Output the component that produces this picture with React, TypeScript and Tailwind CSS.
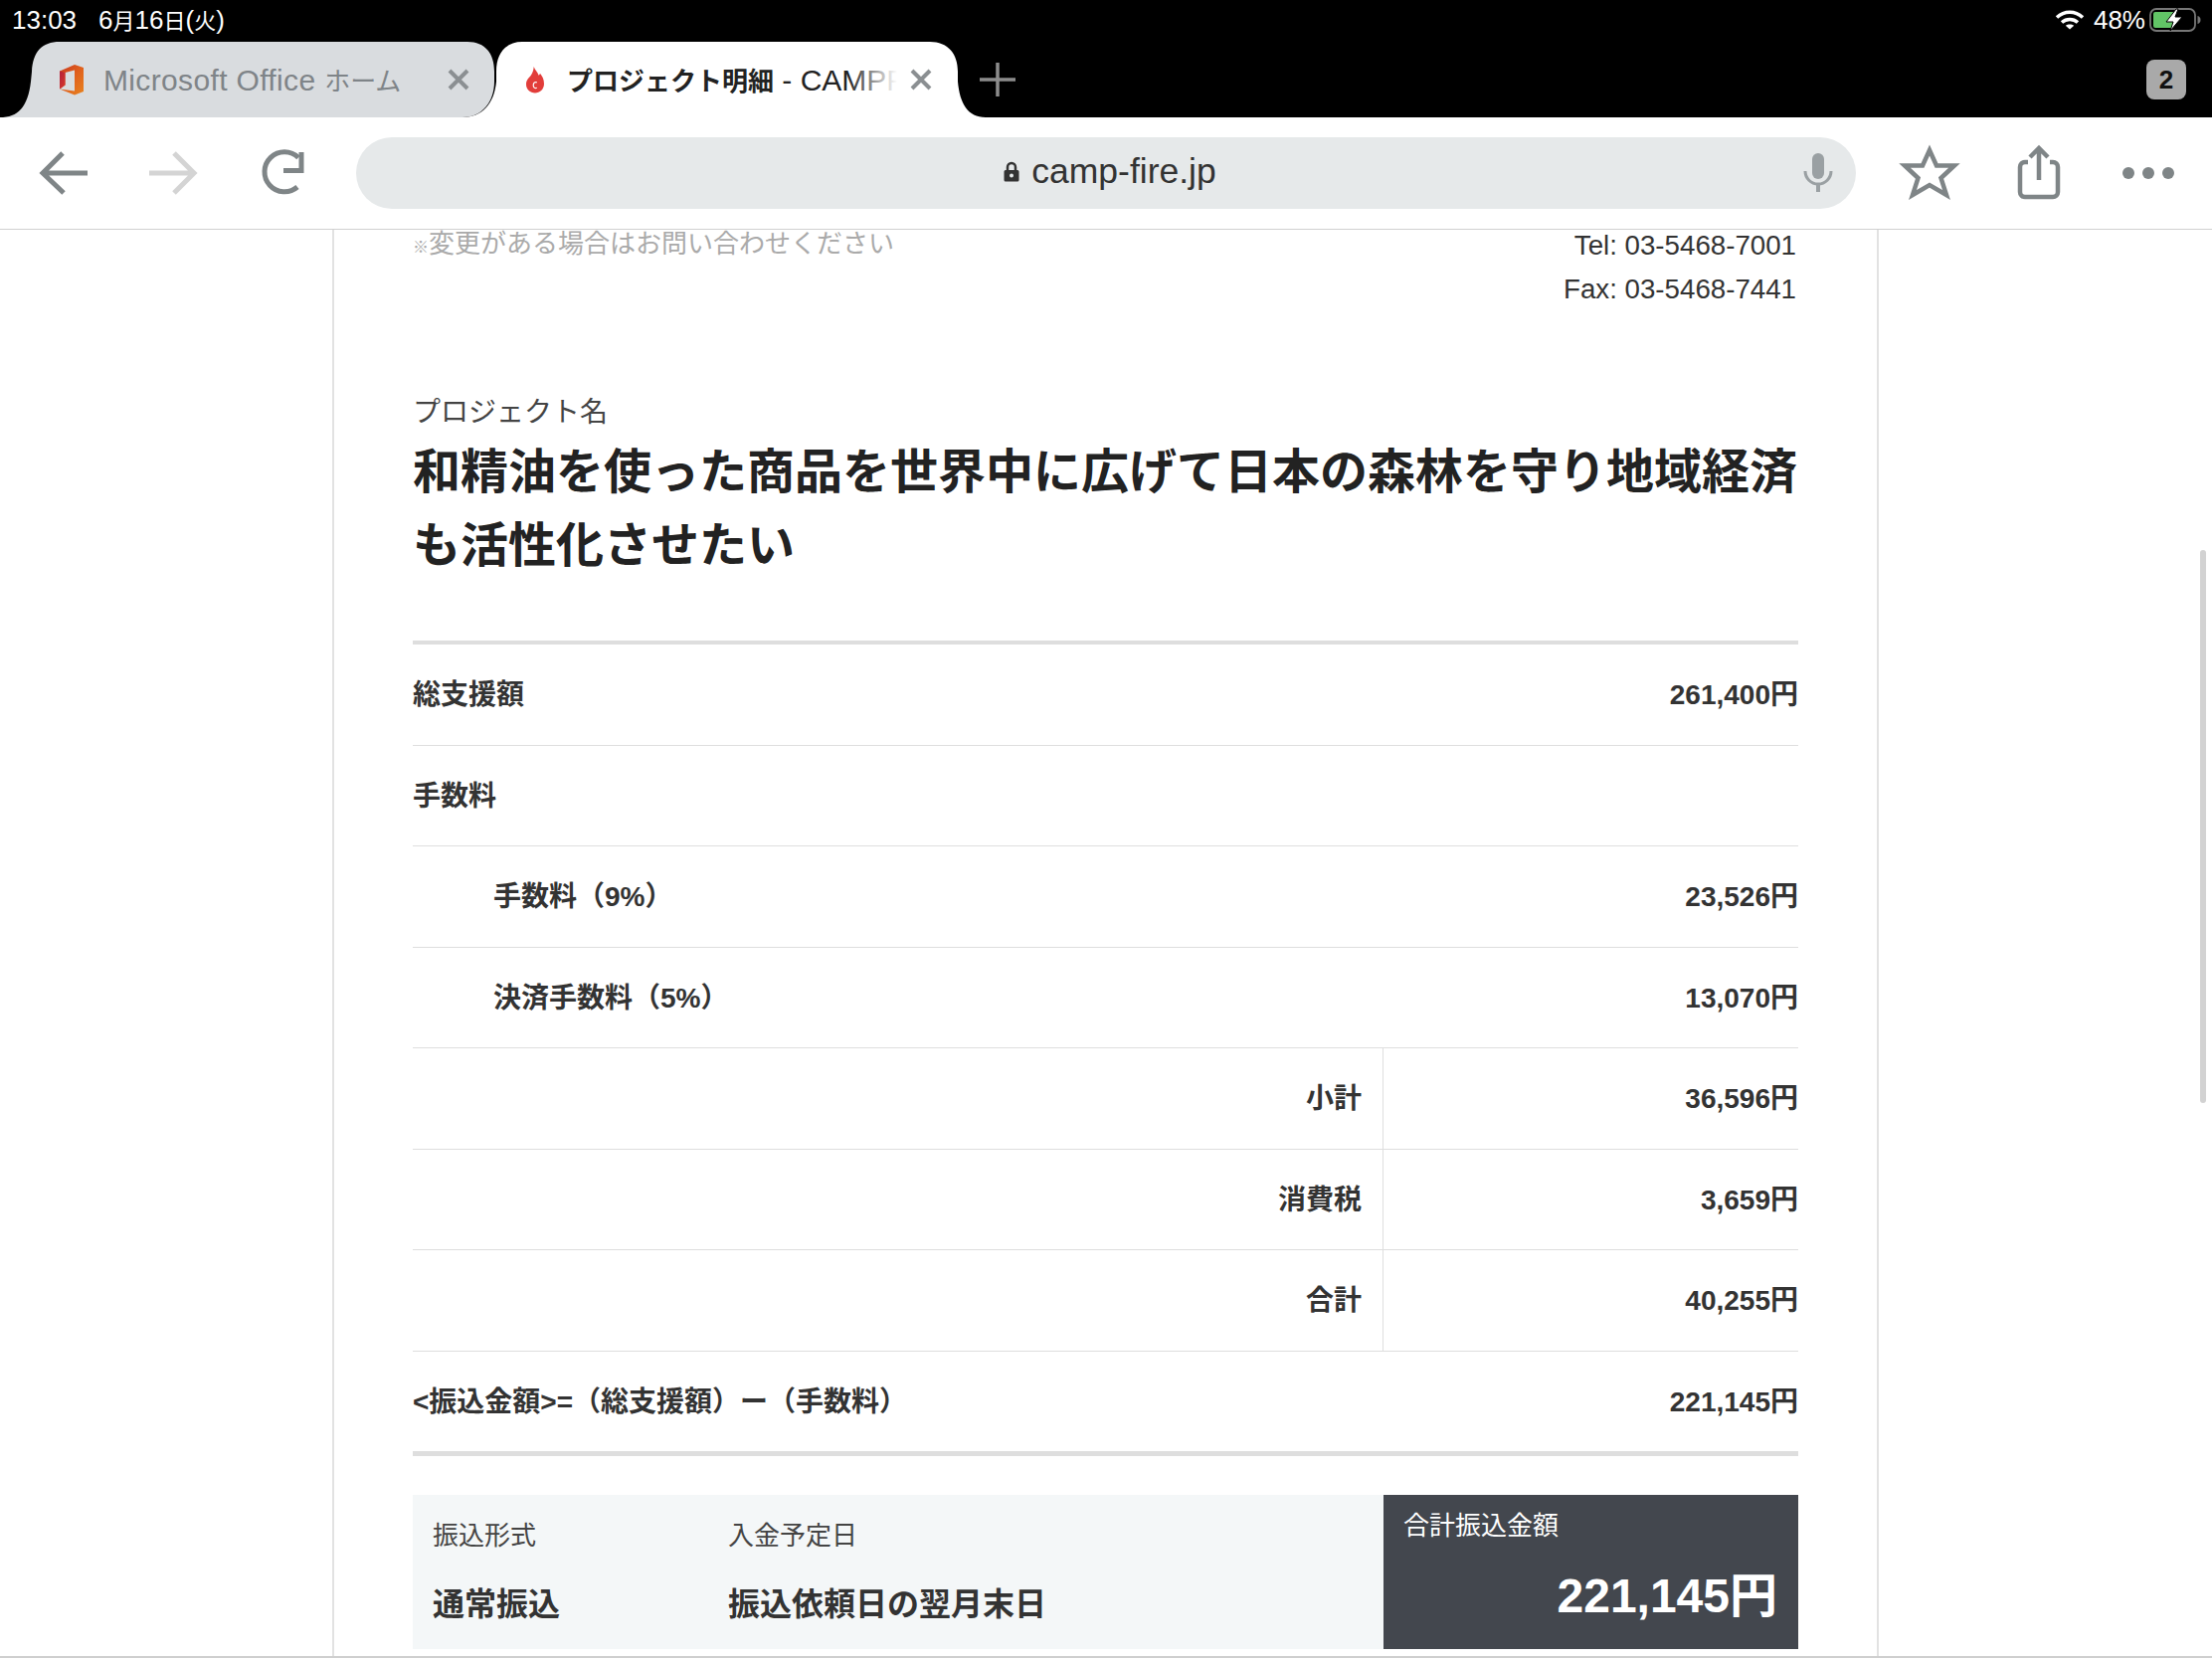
import React from "react";

const Back = () => (
  <svg width="110" height="60" viewBox="0 0 110 60" fill="none" stroke="#7f8587" strokeWidth="5">
    <path d="M32 30H78M53 10L33 30L54 50" />
  </svg>
);
const Forward = () => (
  <svg width="110" height="60" viewBox="0 0 110 60" fill="none" stroke="#d4d4d4" strokeWidth="5">
    <path d="M30 30H76M55 10L75 30L55 50" />
  </svg>
);
const Reload = () => (
  <svg width="110" height="60" viewBox="0 0 110 60" fill="none" stroke="#7f8587" strokeWidth="5">
    <path d="M70 14.500A20 20 0 1 0 69 44" />
    <path d="M55 27.500H73V9" />
  </svg>
);
const Star = () => (
  <svg width="110" height="60" viewBox="0 0 110 60" fill="none" stroke="#7f8587" strokeWidth="4.500" strokeLinejoin="miter">
    <path d="M55 7L62 22.500H80L66.500 35L72 52L55 42L38 52L43.500 35L30 22.500H48Z" />
  </svg>
);
const Share = () => (
  <svg width="110" height="60" viewBox="0 0 110 60" fill="none" stroke="#7f8587" strokeWidth="4.500">
    <path d="M44 19H41A5 5 0 0 0 36 24V49A5 5 0 0 0 41 54H69A5 5 0 0 0 74 49V24A5 5 0 0 0 69 19H66" />
    <path d="M55 37V5M46 14L55 5L64 14" />
  </svg>
);
const Dots = () => (
  <svg width="110" height="60" viewBox="0 0 110 60" fill="#7f8587">
    <circle cx="35" cy="30" r="6" />
    <circle cx="55" cy="30" r="6" />
    <circle cx="75" cy="30" r="6" />
  </svg>
);
const Mic = () => (
  <svg width="32" height="44" viewBox="0 0 32 44" fill="none">
    <rect x="10" y="1" width="12" height="26" rx="6" fill="#9aa0a3" />
    <path d="M3 19A13 13 0 0 0 29 19" stroke="#9aa0a3" strokeWidth="3" />
    <path d="M16 32V40" stroke="#9aa0a3" strokeWidth="4" />
  </svg>
);
const Lock = () => (
  <svg width="16" height="22" viewBox="0 0 16 22">
    <path d="M4 9V6A4 4 0 0 1 12 6V9" fill="none" stroke="#333" strokeWidth="2.500" />
    <path fillRule="evenodd" d="M2 9H14A1.500 1.500 0 0 1 15.500 10.500V19A1.500 1.500 0 0 1 14 20.500H2A1.500 1.500 0 0 1 .5 19V10.500A1.500 1.500 0 0 1 2 9ZM8 12.500A2 2 0 1 0 8 16.500A2 2 0 1 0 8 12.500Z" fill="#333" />
  </svg>
);
const Wifi = () => (
  <svg width="30" height="22" viewBox="0 0 30 22" fill="none" stroke="#fff" strokeWidth="3.500">
    <path d="M2 8.500C9.500 1.500 20.500 1.500 28 8.500" />
    <path d="M7 13.500C11.500 9.500 18.500 9.500 23 13.500" />
    <path d="M15 20.500L10.800 16.800C13 15 17 15 19.200 16.800Z" fill="#fff" stroke="none" />
  </svg>
);
const Battery = () => (
  <svg width="52" height="24" viewBox="0 0 52 24" fill="none">
    <rect x="1" y="1" width="45" height="22" rx="6" stroke="#777" strokeWidth="1.800" />
    <path d="M4 6A2 2 0 0 1 6 4H24V20H6A2 2 0 0 1 4 18Z" fill="#62c466" />
    <path d="M48.500 8V16C50.500 15.500 51.500 14 51.500 12C51.500 10 50.500 8.500 48.500 8Z" fill="#777" />
    <path d="M27 1L17 14H24L21 23L33 9H26L29 1Z" fill="#fff" stroke="#000" strokeWidth="1" />
  </svg>
);
const Close = () => (
  <svg width="22" height="22" viewBox="0 0 22 22" stroke="#8b8f92" strokeWidth="4">
    <path d="M2 2L20 20M20 2L2 20" />
  </svg>
);
const Plus = () => (
  <svg width="36" height="34" viewBox="0 0 36 34" stroke="#8c8c8c" strokeWidth="3.500">
    <path d="M18 0V34M0 17H36" />
  </svg>
);
const Office = () => (
  <svg width="26" height="32" viewBox="0 0 26 32">
    <defs>
      <linearGradient id="off" x1="0" y1="0" x2="1" y2="1">
        <stop offset="0" stopColor="#c8371f" />
        <stop offset="0.5" stopColor="#e0601d" />
        <stop offset="1" stopColor="#e8841f" />
      </linearGradient>
      <linearGradient id="offb" x1="0" y1="0" x2="1" y2="1">
        <stop offset="0" stopColor="#b3203a" />
        <stop offset="1" stopColor="#d8392a" />
      </linearGradient>
    </defs>
    <path d="M1 7.500L16 1L25 4V28L16 31.500L1 25.500L16 27.500V6.500L6.500 9V21.500L1 25.500Z" fill="url(#off)" />
    <path d="M1 7.500L6.500 9V21.500L1 25.500Z" fill="url(#offb)" />
  </svg>
);
const Flame = () => (
  <svg width="18" height="27" viewBox="0 0 20 28" preserveAspectRatio="none">
    <path d="M8.500 0C10 4 13 5.500 14 9C15 8.500 15.500 7.500 15.500 7C18 10 20 13 20 18C20 24 15 27.500 10 27.500C4.500 27.500 0 24 0 18.500C0 13 4 11.500 6 8C7.500 5.500 8.500 3 8.500 0Z" fill="#e23d3a" />
    <path d="M12 16.500C10 15.500 8 17 8 19.500C8 22 10 23 12 22" fill="none" stroke="#fff" strokeWidth="1.300" />
  </svg>
);

const Row = ({ label, value, indent }: { label: string; value?: string; indent?: boolean }) => (
  <div className={`flex h-[101.5px] items-center justify-between border-b border-[#dedede] pt-[2px] text-[28px] font-bold text-[#333] ${indent ? "pl-[81px]" : ""}`}>
    <span>{label}</span>
    <span>{value}</span>
  </div>
);

const SubRow = ({ label, value }: { label: string; value: string }) => (
  <div className="flex h-[101.5px] border-b border-[#dedede] text-[28px] font-bold text-[#333]">
    <div className="flex w-[976px] items-center justify-end border-r border-[#dedede] pr-[21px] pt-[2px]">{label}</div>
    <div className="flex flex-1 items-center justify-end pt-[2px]">{value}</div>
  </div>
);

export default function App() {
  return (
    <div className="relative h-[1668px] w-[2224px] overflow-hidden bg-white font-['Liberation_Sans','Noto_Sans_CJK_JP',sans-serif]">
      {/* status bar and tabs */}
      <div className="h-[118px] bg-black">
        <div className="flex h-[42px] items-center justify-between pb-[2px] pl-[12px] pr-[11px] text-[26px] text-white">
          <div className="flex items-center gap-[22px]">
            <span>13:03</span>
            <span>
              6<span className="text-[22px]">月</span>16<span className="text-[22px]">日</span>(<span className="text-[22px]">火</span>)
            </span>
          </div>
          <div className="flex items-center">
            <div className="mr-[9px]">
              <Wifi />
            </div>
            <span className="mr-[4px]">48%</span>
            <Battery />
          </div>
        </div>
        <div className="flex h-[76px] items-center">
          <div className="relative flex h-full w-[499px] shrink-0 items-center">
            <svg className="absolute left-0 top-0" width="500" height="76" viewBox="0 0 500 76">
              <path d="M0 76C18 76 28 66 31 40L32 30C33 10 42 0 60 0L470 0C488 0 497 12 497 30L497 40C497 60 485 76 465 76Z" fill="#d9dcdf" />
            </svg>
            <div className="relative ml-[59px] flex items-center">
              <Office />
              <span className="ml-[19px] w-[346px] whitespace-nowrap pt-[1px] text-[30px] tracking-[0.35px] text-[#7f8488]">
                Microsoft Office <span className="text-[26px] tracking-normal">ホーム</span>
              </span>
              <Close />
            </div>
          </div>
          <div className="relative flex h-full w-[464px] shrink-0 items-center">
            <svg className="absolute left-[-34px] top-0" width="526" height="76" viewBox="0 0 526 76">
              <path d="M0 76C20 76 32 62 34 40L34 30C34 10 45 0 60 0L470 0C488 0 498 12 498 30L498 40C500 62 508 76 526 76Z" fill="#fff" />
            </svg>
            <div className="relative ml-[30px] flex items-center">
              <Flame />
              <div className="relative ml-[23px] w-[332px] overflow-hidden whitespace-nowrap pt-[1px] text-[30px] text-[#222]">
                <span className="text-[26px] font-bold">プロジェクト明細</span> - CAMPFIRE
                <div className="absolute inset-y-0 right-0 w-[50px] bg-gradient-to-r from-transparent to-white" />
              </div>
              <div className="ml-[13px]">
                <Close />
              </div>
            </div>
          </div>
          <div className="ml-[22px]">
            <Plus />
          </div>
          <div className="ml-auto mr-[26px] flex h-[40px] w-[40px] items-center justify-center rounded-[8px] bg-[#a9a9a9] text-[26px] font-bold text-[#111]">2</div>
        </div>
      </div>

      {/* toolbar */}
      <div className="flex h-[113px] items-center border-b border-[#d0d0d0] bg-white pl-[10px]">
        <Back />
        <Forward />
        <Reload />
        <div className="relative ml-[18px] flex h-[72px] w-[1508px] items-center justify-center rounded-full bg-[#e6e9ea] pl-[8px]">
          <div className="flex items-center gap-[12px] pb-[2px] text-[35.500px] text-[#333]">
            <Lock />
            <span>camp-fire.jp</span>
          </div>
          <div className="absolute right-[22px] top-[15px]">
            <Mic />
          </div>
        </div>
        <div className="ml-[19px] flex">
          <Star />
          <Share />
          <Dots />
        </div>
      </div>

      {/* page */}
      <div className="h-[1436px] overflow-hidden border-b-2 border-[#cfcfcf]">
        <div className="ml-[334px] flow-root h-full w-[1555px] border-x-2 border-[#e2e2e2] pl-[79px] pr-[79px]">
          <div className="-mt-[6px] flex items-start justify-between">
            <div className="text-[26px] leading-[40px] text-[#aaaaaa]">
              <span className="text-[16px]">※</span>変更がある場合はお問い合わせください
            </div>
            <div className="pr-[2px] text-right text-[27.700px] leading-[44px] text-[#333]">
              <div>Tel: 03-5468-7001</div>
              <div>Fax: 03-5468-7441</div>
            </div>
          </div>
          <div className="mt-[82px] text-[28px] leading-[40px] text-[#444]">プロジェクト名</div>
          <h1 className="mt-[3px] text-[48px] font-bold leading-[74px] text-[#222]">和精油を使った商品を世界中に広げて日本の森林を守り地域経済も活性化させたい</h1>
          <div className="mt-[58px] border-t-[4px] border-[#dedede]">
            <Row label="総支援額" value="261,400円" />
            <Row label="手数料" />
            <Row label="手数料（9%）" value="23,526円" indent />
            <Row label="決済手数料（5%）" value="13,070円" indent />
            <SubRow label="小計" value="36,596円" />
            <SubRow label="消費税" value="3,659円" />
            <SubRow label="合計" value="40,255円" />
            <Row label="<振込金額>=（総支援額）ー（手数料）" value="221,145円" />
          </div>
          <div className="h-[4px] bg-[#dedede]" />
          <div className="mt-[39px] flex h-[155px]">
            <div className="flex w-[976px] bg-[#f4f7f8] pl-[20px] pt-[23px] text-[#333]">
              <div className="w-[297px]">
                <div className="text-[26px] leading-[36px] text-[#444]">振込形式</div>
                <div className="mt-[31px] text-[32px] font-bold leading-[40px]">通常振込</div>
              </div>
              <div>
                <div className="text-[26px] leading-[36px] text-[#444]">入金予定日</div>
                <div className="mt-[31px] text-[32px] font-bold leading-[40px]">振込依頼日の翌月末日</div>
              </div>
            </div>
            <div className="flex-1 bg-[#43474e] pl-[20px] pr-[21px] pt-[13px] text-white">
              <div className="text-[26px] leading-[36px]">合計振込金額</div>
              <div className="mt-[25px] text-right text-[48px] font-bold leading-[56px]">221,145円</div>
            </div>
          </div>
        </div>
      </div>

      {/* scroll indicator */}
      <div className="absolute left-[2212px] top-[553px] h-[556px] w-[6px] rounded-full bg-[#d2d2d2]" />
    </div>
  );
}
